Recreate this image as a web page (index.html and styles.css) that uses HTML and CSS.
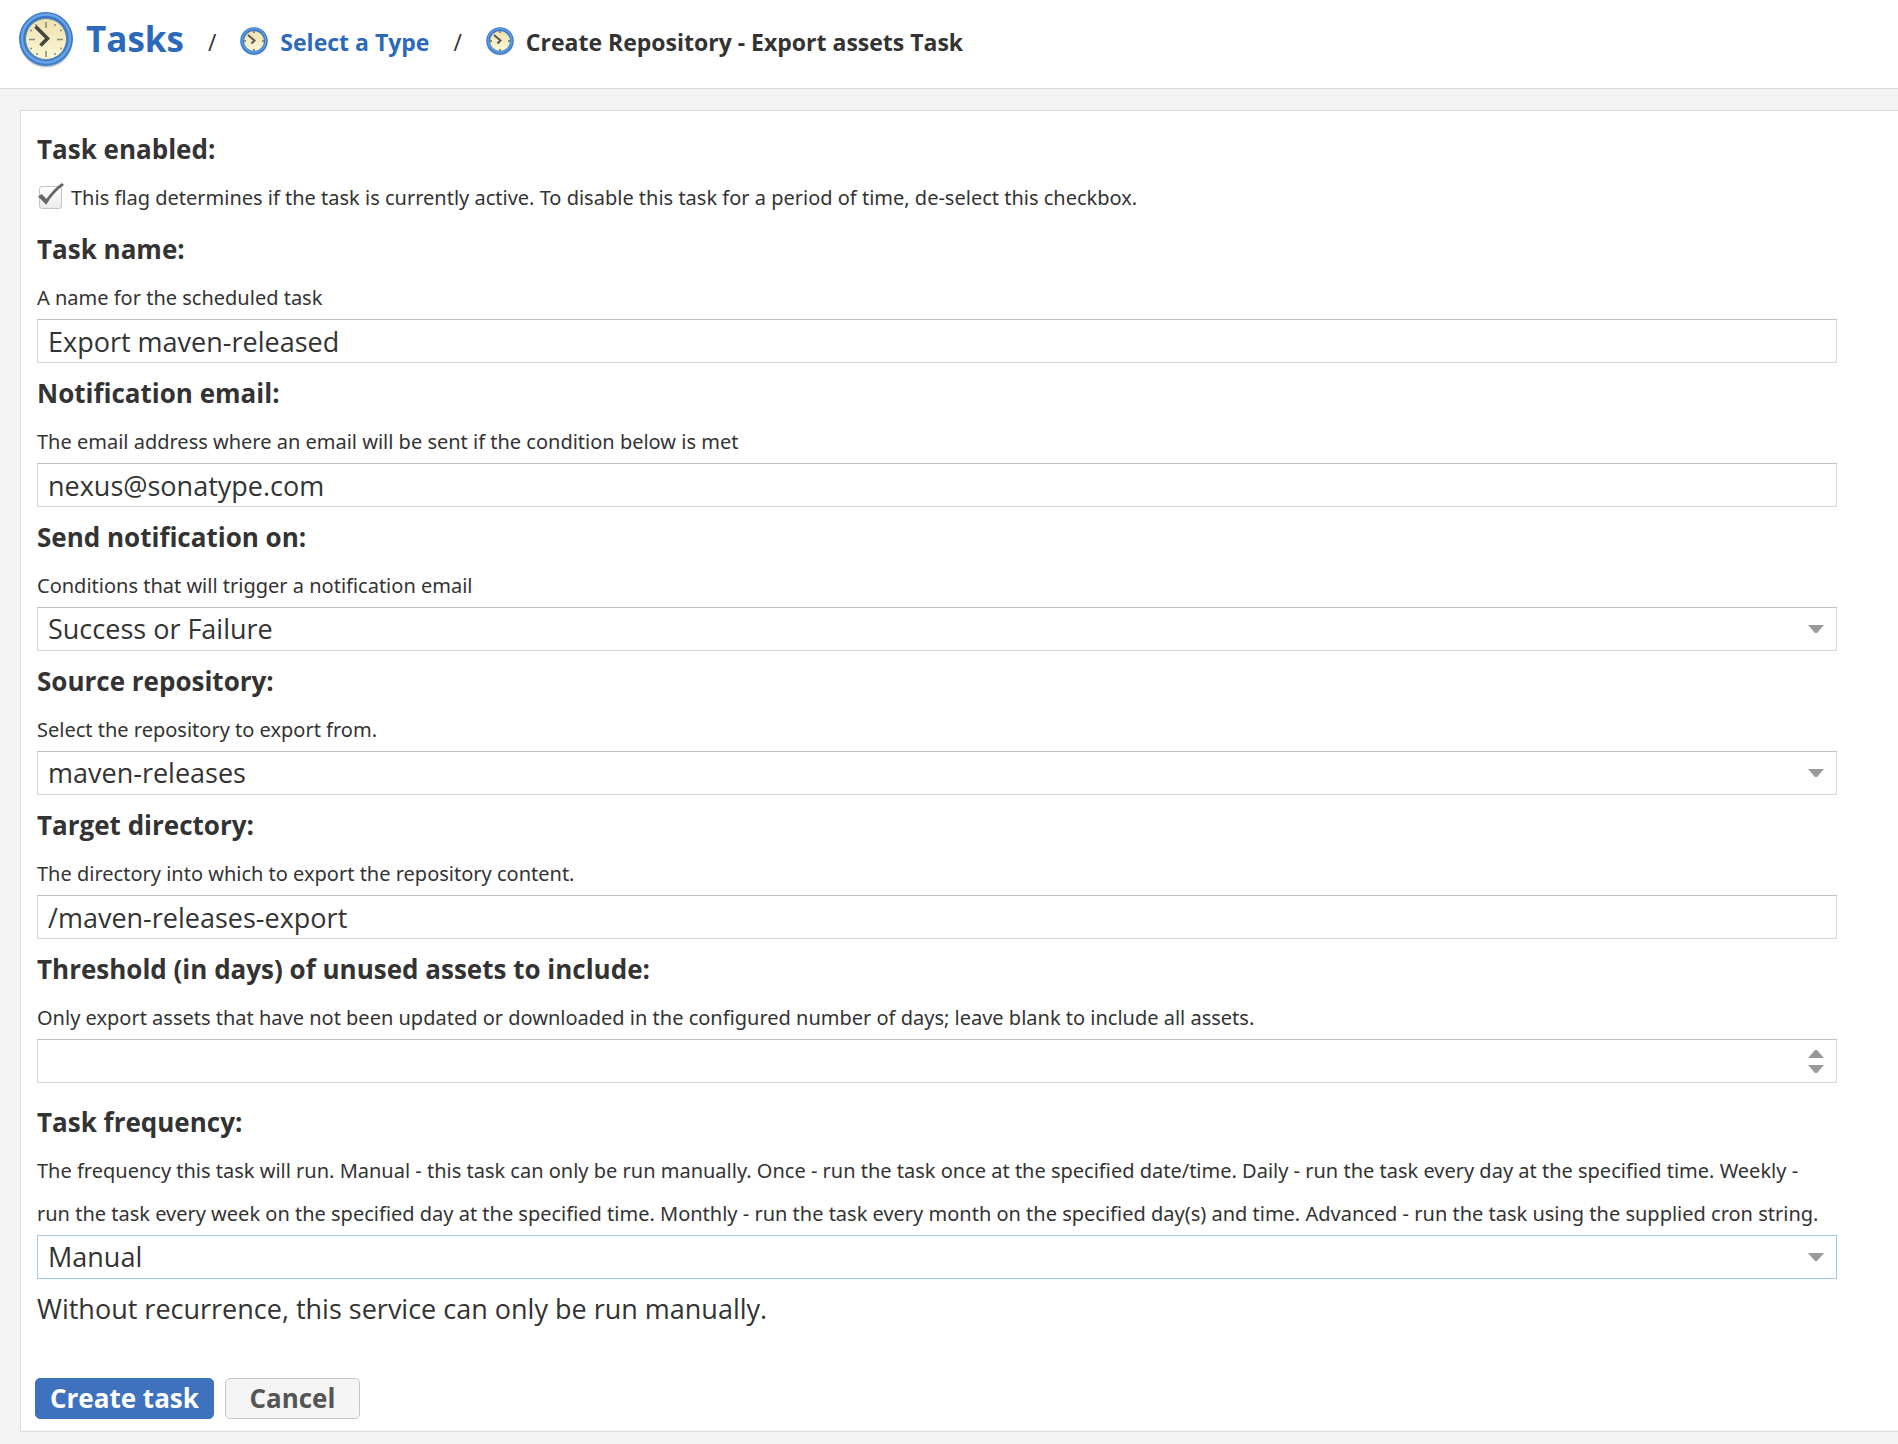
FILE: index.html
```
<!DOCTYPE html>
<html lang="en">
<head>
<meta charset="utf-8">
<title>Tasks - Create Repository - Export assets Task</title>
<link rel="stylesheet" href="styles.css">
</head>
<body>
<svg class="defs" aria-hidden="true">
  <defs>
    <linearGradient id="rim" x1="0" y1="0" x2="0" y2="1">
      <stop offset="0" stop-color="#3a75c2"/><stop offset="1" stop-color="#3f7fcb"/>
    </linearGradient>
    <linearGradient id="face" x1="0" y1="0" x2="0" y2="1">
      <stop offset="0" stop-color="#f0e0ae"/><stop offset="1" stop-color="#fbf7d6"/>
    </linearGradient>
  </defs>
  <symbol id="clock" viewBox="0 0 56 58">
    <circle cx="28" cy="31" r="26" fill="#000" opacity=".12"/>
    <circle cx="28" cy="30" r="26" fill="#000" opacity=".15"/>
    <circle cx="28" cy="28" r="27" fill="url(#rim)"/>
    <circle cx="28" cy="27.500" r="24" fill="none" stroke="#68a3e8" stroke-width="2.500"/>
    <circle cx="28" cy="28" r="20.500" fill="url(#face)" stroke="#5f86b0" stroke-width="1"/>
    <path d="M28 11v6M28 40v6M11 28.500h6M39 28.500h6" stroke="#8d8b7c" stroke-width="1.600"/>
    <g fill="#8d8b7c">
      <circle cx="37" cy="14" r="1"/><circle cx="43" cy="19.500" r="1"/><circle cx="43" cy="37.500" r="1"/><circle cx="37" cy="43" r="1"/>
      <circle cx="19" cy="43" r="1"/><circle cx="13" cy="37.500" r="1"/><circle cx="13" cy="19.500" r="1"/><circle cx="18" cy="14" r="1"/>
    </g>
    <path d="M17.500 15.500L29.500 27.500l-7 7" fill="none" stroke="#46453f" stroke-width="3.600"/>
  </symbol>
  <symbol id="clock-small" viewBox="0 0 28 30">
    <circle cx="14" cy="16" r="12.500" fill="#000" opacity=".18"/>
    <circle cx="14" cy="14" r="13.800" fill="url(#rim)"/>
    <circle cx="14" cy="13.500" r="11.800" fill="none" stroke="#5f9ce2" stroke-width="1.500"/>
    <circle cx="14" cy="14" r="10" fill="url(#face)"/>
    <path d="M14 4v2M14 22v2M4 14h2M22 14h2" stroke="#6d6b60" stroke-width="1.500"/>
    <path d="M8 8l6.500 5.500-3 3" fill="none" stroke="#5a584f" stroke-width="2"/>
  </symbol>
  <symbol id="down" viewBox="0 0 16 8"><path d="M0 0h16L9 8H7z" fill="#999"/></symbol>
  <symbol id="up" viewBox="0 0 16 8"><path d="M7 0h2l7 8H0z" fill="#999"/></symbol>
</svg>

<header class="header">
  <nav class="crumbs" aria-label="Breadcrumb">
    <a class="crumb crumb-root" href="#tasks"><svg class="icon-large" aria-hidden="true"><use href="#clock"/></svg>Tasks</a>
    <span class="slash">/</span>
    <a class="crumb" href="#type"><svg class="icon-small" aria-hidden="true"><use href="#clock-small"/></svg>Select a Type</a>
    <span class="slash">/</span>
    <span class="crumb"><svg class="icon-small" aria-hidden="true"><use href="#clock-small"/></svg>Create Repository - Export assets Task</span>
  </nav>
</header>

<main class="content">
  <form class="panel">
    <div class="field">
      <label class="label" for="enabled">Task enabled:</label>
      <div class="check-row">
        <span class="check">
          <input class="checkbox" type="checkbox" id="enabled" aria-describedby="enabled-help" checked>
          <svg class="tick" viewBox="0 0 26 26" aria-hidden="true"><path d="M1 13l3.500-2.500 4.500 5C13 10 18 4 24 0l2 2C19 7 13.500 13 9 21z" fill="#666"/></svg>
        </span>
        <span class="help" id="enabled-help">This flag determines if the task is currently active. To disable this task for a period of time, de-select this checkbox.</span>
      </div>
    </div>

    <div class="field">
      <label class="label" for="name">Task name:</label>
      <span class="help" id="name-help">A name for the scheduled task</span>
      <input class="control" type="text" id="name" value="Export maven-released" aria-describedby="name-help">
    </div>

    <div class="field">
      <label class="label" for="email">Notification email:</label>
      <span class="help" id="email-help">The email address where an email will be sent if the condition below is met</span>
      <input class="control" type="email" id="email" value="nexus@sonatype.com" aria-describedby="email-help">
    </div>

    <div class="field">
      <label class="label" for="condition">Send notification on:</label>
      <span class="help" id="condition-help">Conditions that will trigger a notification email</span>
      <div class="picker">
        <select class="control" id="condition" aria-describedby="condition-help"><option>Success or Failure</option></select>
        <svg class="arrow" aria-hidden="true"><use href="#down"/></svg>
      </div>
    </div>

    <div class="field">
      <label class="label" for="source">Source repository:</label>
      <span class="help" id="source-help">Select the repository to export from.</span>
      <div class="picker">
        <select class="control" id="source" aria-describedby="source-help"><option>maven-releases</option></select>
        <svg class="arrow" aria-hidden="true"><use href="#down"/></svg>
      </div>
    </div>

    <div class="field">
      <label class="label" for="target">Target directory:</label>
      <span class="help" id="target-help">The directory into which to export the repository content.</span>
      <input class="control" type="text" id="target" value="/maven-releases-export" aria-describedby="target-help">
    </div>

    <div class="field">
      <label class="label" for="threshold">Threshold (in days) of unused assets to include:</label>
      <span class="help" id="threshold-help">Only export assets that have not been updated or downloaded in the configured number of days; leave blank to include all assets.</span>
      <div class="picker">
        <input class="control" type="number" id="threshold" aria-describedby="threshold-help">
        <span class="spinner">
          <button class="step" type="button" aria-label="Increase"><svg class="arrow" aria-hidden="true"><use href="#up"/></svg></button>
          <button class="step" type="button" aria-label="Decrease"><svg class="arrow" aria-hidden="true"><use href="#down"/></svg></button>
        </span>
      </div>
    </div>

    <div class="field field-frequency">
      <label class="label" for="frequency">Task frequency:</label>
      <span class="help" id="frequency-help">The frequency this task will run. Manual - this task can only be run manually. Once - run the task once at the specified date/time. Daily - run the task every day at the specified time. Weekly -<br>run the task every week on the specified day at the specified time. Monthly - run the task every month on the specified day(s) and time. Advanced - run the task using the supplied cron string.</span>
      <div class="picker">
        <select class="control control-active" id="frequency" aria-describedby="frequency-help"><option>Manual</option></select>
        <svg class="arrow" aria-hidden="true"><use href="#down"/></svg>
      </div>
    </div>

    <p class="note">Without recurrence, this service can only be run manually.</p>

    <div class="actions">
      <button class="button button-primary" type="submit">Create task</button>
      <button class="button" type="button">Cancel</button>
    </div>
  </form>
</main>
</body>
</html>
```
FILE: styles.css
```
* {
  box-sizing: border-box;
}

body {
  margin: 0;
  background: #f3f3f3;
  color: #333;
  font-family: "Open Sans", "Noto Sans", sans-serif;
}

.defs {
  position: absolute;
  width: 0;
  height: 0;
}

/* Breadcrumb header */
.header {
  padding: 11px 18px 21px;
  background: #fff;
  border-bottom: 1px solid #dadada;
}

.crumbs {
  display: flex;
  align-items: center;
  gap: 24px;
}

.crumb {
  display: flex;
  align-items: center;
  gap: 12px;
  padding-top: 6px;
  font-size: 23px;
  line-height: 32px;
  font-weight: 700;
  text-decoration: none;
}

a.crumb {
  color: #2b69ba;
}

.crumb-root {
  padding-top: 0;
  font-size: 35px;
  line-height: 56px;
}

.slash {
  padding-top: 6px;
  font-size: 23px;
  line-height: 32px;
}

.icon-large {
  width: 56px;
  height: 58px;
  margin-bottom: -2px;
}

.icon-small {
  width: 28px;
  height: 30px;
}

/* Form panel */
.content {
  padding: 21px 0 12px 20px;
}

.panel {
  padding: 11px 61px 12px 16px;
  background: #fff;
  border: 1px solid #dadada;
  border-right: 0;
}

.field {
  display: flex;
  flex-direction: column;
  margin-bottom: 3px;
}

.field-frequency {
  margin-top: 12px;
}

.label {
  font-size: 26px;
  line-height: 54px;
  font-weight: 700;
}

.help {
  font-family: "Noto Sans", "Open Sans", sans-serif;
  font-size: 20px;
  line-height: 43px;
}

.check-row {
  display: flex;
  align-items: center;
  gap: 8px;
}

.check {
  display: grid;
  width: 26px;
  height: 30px;
  padding-bottom: 4px;
}

.checkbox,
.tick {
  grid-area: 1 / 1;
}

.checkbox {
  appearance: none;
  place-self: end start;
  width: 23px;
  height: 23px;
  margin: 0 2px;
  border: 1px solid #c4c4c4;
  border-radius: 3px;
  background: linear-gradient(#fff, #ebebeb);
}

.tick {
  pointer-events: none;
}

.checkbox:not(:checked) + .tick {
  visibility: hidden;
}

.control {
  appearance: none;
  width: 100%;
  height: 44px;
  padding: 0 10px;
  border: 1px solid #d6d6d6;
  border-top-color: #c0c0c0;
  border-radius: 0;
  background: #fff;
  color: #333;
  font-family: inherit;
  font-size: 27px;
  line-height: 42px;
}

.control-active {
  border-color: #9fc8e8;
}

.control[type="number"] {
  appearance: textfield;
}

.picker {
  display: grid;
  align-items: center;
}

.picker > * {
  grid-area: 1 / 1;
}

.arrow {
  display: block;
  width: 16px;
  height: 8px;
  pointer-events: none;
}

.picker > .arrow,
.spinner {
  justify-self: end;
  margin-right: 13px;
}

.spinner {
  display: grid;
  gap: 7px;
}

.step {
  padding: 0;
  border: 0;
  background: none;
}

.note {
  margin: 0;
  font-size: 27px;
  line-height: 54px;
}

/* Form buttons */
.actions {
  display: flex;
  gap: 11px;
  margin-top: 42px;
  margin-left: -2px;
}

.button {
  min-width: 135px;
  height: 41px;
  padding: 0 14px 2px;
  border: 1px solid #c6c6c6;
  border-radius: 5px;
  background: #f5f5f5;
  color: #555;
  font-family: inherit;
  font-size: 26px;
  line-height: 36px;
  font-weight: 700;
}

.button-primary {
  border-color: #3e72bf;
  background: #3e72bf;
  color: #fff;
}
```
